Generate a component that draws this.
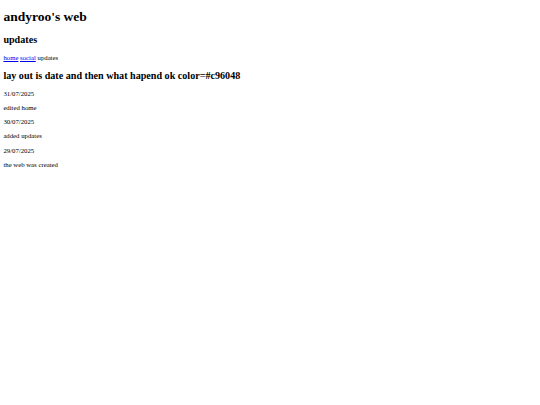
export default function App() {
  const entries = [
    ["31/07/2025", "edited home"],
    ["30/07/2025", "added updates"],
    ["29/07/2025", "the web was created"],
  ];
  return (
    <div className="mx-[3.375px] my-[3.375px] font-['Liberation_Serif','Times_New_Roman',serif] text-black text-[6.75px] leading-[7.5px]">
      <h1 className="text-[13.5px] font-bold my-[9.045px] leading-[15.52px]">andyroo's web</h1>
      <h2 className="text-[10.125px] font-bold my-[8.404px] leading-[11.64px]">updates</h2>
      <p className="my-[6.75px]">
        <a href="#" className="text-[#0000ee] underline">home</a>{" "}
        <a href="#" className="text-[#0000ee] underline">social</a> updates
      </p>
      <h2 className="text-[10.125px] font-bold my-[8.404px] leading-[11.64px]">
        lay out is date and then what hapend ok color=#c96048
      </h2>
      {entries.map(([d, t]) => (
        <div key={d}>
          <p className="my-[6.75px]">{d}</p>
          <p className="my-[6.75px]">{t}</p>
        </div>
      ))}
    </div>
  );
}
